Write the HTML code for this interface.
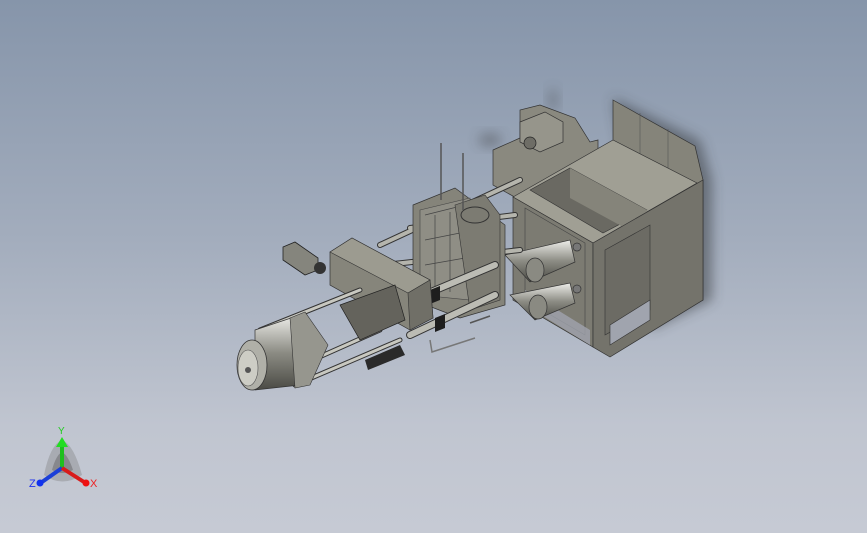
<!DOCTYPE html>
<html><head><meta charset="utf-8"><style>
html,body{margin:0;padding:0}
body{width:867px;height:533px;overflow:hidden;background:linear-gradient(180deg,#8695aa 0%,#a3adbd 45%,#c0c5d0 80%,#c6cad4 100%);font-family:"Liberation Sans",sans-serif}
svg{position:absolute;left:0;top:0}
</style></head><body>
<svg width="867" height="533" viewBox="0 0 867 533">
<defs>
<filter id="b" x="-50%" y="-50%" width="200%" height="200%"><feGaussianBlur stdDeviation="6"/></filter>
<linearGradient id="cyl" x1="0" y1="0" x2="0" y2="1"><stop offset="0" stop-color="#eeeeea"/><stop offset=".5" stop-color="#8c8c84"/><stop offset="1" stop-color="#4a4a44"/></linearGradient>
</defs>
<path d="M613,98 L700,140 L712,180 L712,300 L650,330 Z" fill="#303438" opacity=".5" filter="url(#b)"/>
<ellipse cx="490" cy="140" rx="12" ry="7" fill="#333" opacity=".35" filter="url(#b)"/>
<ellipse cx="553" cy="100" rx="5" ry="12" fill="#333" opacity=".3" filter="url(#b)"/>
<path d="M613,100 L695,146 L703,180 L703,300 L653,327 L653,210 L613,188 Z" fill="#85847a" stroke="#333" stroke-width=".7"/>
<path d="M640,113 L640,200 M668,129 L668,215" stroke="#555" stroke-width=".6"/>
<path d="M493,150 L520,138 L520,110 L540,105 L575,118 L590,142 L598,140 L598,160 L520,200 L493,185 Z" fill="#8a897f" stroke="#333" stroke-width=".7"/>
<path d="M520,122 L545,112 L563,122 L563,142 L540,152 L520,142 Z" fill="#96958b" stroke="#333" stroke-width=".7"/>
<circle cx="530" cy="143" r="6" fill="#6e6d66" stroke="#222" stroke-width=".7"/>
<path d="M513,197 L613,140 L697,183 L593,243 Z" fill="#a09f94" stroke="#333" stroke-width=".7"/>
<path d="M530,190 L570,168 L647,210 L603,233 Z" fill="#6a6962" stroke="#333" stroke-width=".6"/>
<path d="M570,168 L647,210 L647,240 L570,198 Z" fill="#85847a"/>
<path d="M513,197 L593,243 L593,347 L513,300 Z" fill="#7c7b72" stroke="#333" stroke-width=".7"/>
<path d="M525,208 L585,243 L585,335 L525,300 Z" fill="none" stroke="#444" stroke-width=".6"/>
<path d="M593,243 L703,180 L703,300 L610,357 L593,347 Z" fill="#74736b" stroke="#333" stroke-width=".7"/>
<path d="M605,250 L650,225 L650,310 L605,335 Z" fill="#6c6b64" stroke="#333" stroke-width=".6"/>
<path d="M610,325 L650,300 L650,320 L610,345 Z" fill="#a0a4ae" stroke="#333" stroke-width=".6"/>
<path d="M525,290 L590,330 L590,345 L525,305 Z" fill="#a0a4ae" opacity=".8"/>
<g stroke="#333" stroke-width=".7">
<path d="M505,255 L570,240 L575,262 L530,282 Z" fill="url(#cyl)"/>
<ellipse cx="535" cy="270" rx="9" ry="12" fill="#8a8a82"/>
<path d="M510,295 L570,283 L575,303 L535,320 Z" fill="url(#cyl)"/>
<ellipse cx="538" cy="307" rx="9" ry="12" fill="#8a8a82"/>
<circle cx="577" cy="247" r="4" fill="#777"/><circle cx="577" cy="289" r="4" fill="#777"/>
</g>
<g stroke="#333" stroke-width="6" stroke-linecap="round">
<line x1="380" y1="245" x2="520" y2="180"/><line x1="410" y1="228" x2="515" y2="215"/>
<line x1="340" y1="270" x2="520" y2="250"/>
</g>
<g stroke="#b5b5ad" stroke-width="4" stroke-linecap="round">
<line x1="380" y1="245" x2="520" y2="180"/><line x1="410" y1="228" x2="515" y2="215"/>
<line x1="340" y1="270" x2="520" y2="250"/>
</g>
<path d="M413,205 L455,188 L505,225 L505,305 L460,318 L413,300 Z" fill="#85847a" stroke="#333" stroke-width=".7"/>
<path d="M420,210 L470,198 L470,300 L420,295 Z" fill="#8f8e85" stroke="#444" stroke-width=".6"/>
<path d="M425,215 L465,205 M425,240 L465,232 M425,265 L465,258 M435,215 L435,290 M450,212 L450,292" stroke="#444" stroke-width=".7"/>
<path d="M455,205 L485,195 L500,215 L500,300 L470,310 Z" fill="#7c7b72" stroke="#333" stroke-width=".6"/>
<ellipse cx="475" cy="215" rx="14" ry="8" fill="none" stroke="#333" stroke-width="1"/>
<g stroke="#555" stroke-width="1.5"><line x1="441" y1="143" x2="441" y2="200"/><line x1="463" y1="153" x2="463" y2="210"/></g>
<g stroke="#333" stroke-width="8" stroke-linecap="round"><line x1="400" y1="305" x2="495" y2="265"/><line x1="410" y1="335" x2="495" y2="295"/></g>
<g stroke="#bcbcb4" stroke-width="6" stroke-linecap="round"><line x1="400" y1="305" x2="495" y2="265"/><line x1="410" y1="335" x2="495" y2="295"/></g>
<path d="M430,290 L440,286 L440,300 L430,304 Z M435,318 L445,314 L445,328 L435,332 Z" fill="#1e1e1e"/>
<path d="M330,252 L352,238 L430,280 L433,318 L410,330 L330,285 Z" fill="#86857b" stroke="#333" stroke-width=".7"/>
<path d="M330,252 L352,238 L430,280 L408,293 Z" fill="#9c9b90" stroke="#333" stroke-width=".6"/>
<path d="M408,293 L430,280 L433,318 L410,330 Z" fill="#706f67" stroke="#333" stroke-width=".6"/>
<path d="M283,247 L295,242 L318,258 L318,270 L305,275 L283,260 Z" fill="#85857d" stroke="#222" stroke-width=".8"/>
<circle cx="320" cy="268" r="6" fill="#333"/>
<g stroke="#333" stroke-width="5" stroke-linecap="round"><line x1="260" y1="330" x2="360" y2="290"/><line x1="290" y1="370" x2="380" y2="330"/><line x1="295" y1="385" x2="400" y2="340"/></g>
<g stroke="#c8c8c0" stroke-width="3" stroke-linecap="round"><line x1="260" y1="330" x2="360" y2="290"/><line x1="290" y1="370" x2="380" y2="330"/><line x1="295" y1="385" x2="400" y2="340"/></g>
<path d="M340,305 L395,285 L405,320 L360,340 Z" fill="#64635c" stroke="#222" stroke-width=".7"/>
<path d="M365,360 L400,345 L405,355 L368,370 Z" fill="#2a2a2a"/>
<path d="M255,330 L300,315 L325,350 L300,385 L255,390 Z" fill="url(#cyl)" stroke="#333" stroke-width=".7"/>
<ellipse cx="252" cy="365" rx="15" ry="25" fill="#b0b0a8" stroke="#333" stroke-width=".8"/>
<ellipse cx="248" cy="368" rx="10" ry="18" fill="#cdcdc5" stroke="#555" stroke-width=".6"/>
<circle cx="248" cy="370" r="3" fill="#555"/>
<path d="M290,318 L305,312 L328,345 L310,385 L295,388 Z" fill="#96968e" stroke="#333" stroke-width=".6"/>
<path d="M430,340 L432,352 L475,338" fill="none" stroke="#777" stroke-width="1.5"/>
<line x1="470" y1="323" x2="490" y2="316" stroke="#555" stroke-width="1.5"/>
</svg>
<svg width="867" height="533" viewBox="0 0 867 533">
<path d="M44,475 Q50,445 62,440 Q74,445 82,475 Q62,488 44,475 Z" fill="#777" opacity=".35"/>
<path d="M52,470 Q56,455 62,452 Q68,455 73,470 Q62,476 52,470 Z" fill="#555" opacity=".4"/>
<line x1="62" y1="468" x2="62" y2="445" stroke="#1fbf1f" stroke-width="4"/>
<path d="M56,447 L62,437 L68,447 Z" fill="#22dd22"/>
<line x1="62" y1="468" x2="42" y2="482" stroke="#1b3fd8" stroke-width="4"/>
<circle cx="40" cy="483" r="3.5" fill="#1133ee"/>
<line x1="62" y1="468" x2="84" y2="482" stroke="#d81b1b" stroke-width="4"/>
<circle cx="86" cy="483" r="3.5" fill="#ee1111"/>
<text x="58" y="434" font-size="10" fill="#22cc22" font-family="Liberation Sans">Y</text>
<text x="29" y="487" font-size="11" fill="#2233ee" font-family="Liberation Sans">Z</text>
<text x="90" y="487" font-size="11" fill="#ee2222" font-family="Liberation Sans">X</text>
</svg>
</body></html>
